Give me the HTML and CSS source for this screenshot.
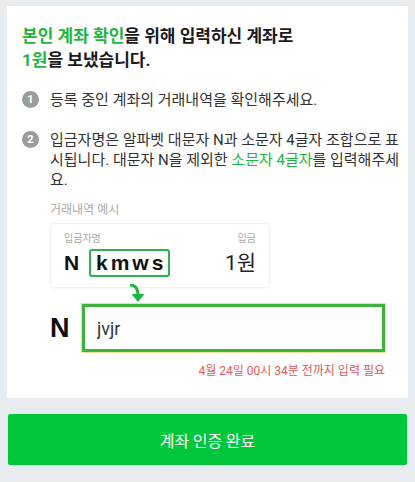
FILE: index.html
```html
<!DOCTYPE html>
<html>
<head>
    <title>계좌 인증</title>
    <link rel="stylesheet" href="styles.css">
</head>
<body>
    <div class="card">
        <h1 class="title"><span class="green">본인 계좌 확인</span>을 위해 입력하신 계좌로<br><span class="green">1원</span>을 보냈습니다.</h1>

        <div class="step">
            <span class="num">1</span>
            <div class="step-body">등록 중인 계좌의 거래내역을 확인해주세요.</div>
        </div>

        <div class="step step-two">
            <span class="num">2</span>
            <div class="step-body">
                <p class="step-text">입금자명은 알파벳 대문자 N과 소문자 4글자 조합으로 표시됩니다. 대문자 N을 제외한 <span class="green">소문자 4글자</span>를 입력해주세요.</p>

                <div class="sample-label">거래내역 예시</div>
                <div class="sample">
                    <div class="sample-head">
                        <span>입금자명</span>
                        <span>입금</span>
                    </div>
                    <div class="sample-row">
                        <span class="sample-n">N</span>
                        <span class="sample-code">kmws</span>
                        <span class="sample-amount">1원</span>
                    </div>
                </div>

                <div class="arrow">
                    <svg width="22" height="20" viewBox="0 0 22 20">
                        <path d="M3 1 Q11 1 11 11" fill="none" stroke="#1fb53c" stroke-width="2.8"/>
                        <polygon points="4.5,10 17.5,10 11,18" fill="#1fb53c"/>
                    </svg>
                </div>

                <div class="input-row">
                    <span class="input-n">N</span>
                    <input class="code-input" type="text" value="jvjr">
                </div>
                <div class="deadline">4월 24일 00시 34분 전까지 입력 필요</div>
            </div>
        </div>
    </div>

    <button class="btn-done">계좌 인증 완료</button>
</body>
</html>
```

FILE: styles.css
```css
body {
    font-family: 'Roboto', 'Noto Sans CJK KR', sans-serif;
    margin: 0;
    padding: 0;
    background-color: #e9ecef;
    color: #222;
}
.card {
    background: white;
    margin: 6px 7px 0;
    padding: 18px 8px 21px 15px;
    height: 353px;
}
.title {
    font-size: 17px;
    font-weight: bold;
    line-height: 24px;
    margin: 0;
    color: #1a1a1a;
}
.green {
    color: #1fb53c;
}
.step {
    display: flex;
    align-items: flex-start;
    margin-top: 18px;
    font-size: 15px;
    line-height: 20px;
    color: #333;
}
.step-two {
    margin-top: 20px;
}
.num {
    flex: none;
    width: 17px;
    height: 17px;
    border-radius: 50%;
    background: #9c9c9c;
    color: white;
    font-size: 11px;
    font-weight: bold;
    line-height: 17px;
    text-align: center;
    margin: 1px 11px 0 0;
}
.step-body {
    flex: 1;
    min-width: 0;
}
.step-text {
    margin: 0;
    word-break: break-all;
}
.sample-label {
    margin-top: 12px;
    font-size: 12px;
    line-height: 16px;
    color: #aaa;
}
.sample {
    width: 192px;
    margin-top: 5px;
    padding: 9px 13px 10px;
    border: 1px solid #eee;
    border-radius: 5px;
    box-shadow: 0 1px 2px rgba(0,0,0,0.04);
}
.sample-head {
    display: flex;
    justify-content: space-between;
    font-size: 10px;
    line-height: 12px;
    color: #aaa;
}
.sample-row {
    display: flex;
    align-items: center;
    margin-top: 4px;
}
.sample-n {
    font-family: 'Liberation Sans', sans-serif;
    font-size: 21px;
    font-weight: bold;
    color: #111;
    width: 25px;
}
.sample-code {
    font-family: 'Liberation Sans', sans-serif;
    font-size: 21px;
    font-weight: bold;
    letter-spacing: 3px;
    color: #111;
    border: 2px solid #2bb34a;
    border-radius: 3px;
    padding: 0 2px 0 5px;
    line-height: 24px;
}
.sample-amount {
    margin-left: auto;
    font-size: 21px;
    color: #222;
}
.arrow {
    margin: -4px 0 0 77px;
    height: 20px;
    position: relative;
}
.input-row {
    display: flex;
    align-items: center;
    gap: 10px;
    margin-right: 15px;
}
.input-n {
    font-family: 'Liberation Sans', sans-serif;
    font-size: 27px;
    font-weight: bold;
    color: #111;
    width: 22px;
}
.code-input {
    flex: 1;
    height: 48px;
    box-sizing: border-box;
    border: 3px solid #3cb43a;
    outline: 1px solid #e8e39a;
    padding: 0 12px;
    font-family: 'Roboto', sans-serif;
    font-size: 18px;
    color: #333;
    min-width: 0;
}
.deadline {
    margin: 11px 15px 0 0;
    text-align: right;
    font-size: 12px;
    line-height: 16px;
    color: #e0575a;
}
.btn-done {
    display: block;
    margin: 16px 8px 0;
    width: 399px;
    height: 51px;
    border: none;
    border-radius: 2px;
    background: #00c73c;
    color: white;
    font-family: 'Noto Sans CJK KR', sans-serif;
    font-size: 16px;
}
```
